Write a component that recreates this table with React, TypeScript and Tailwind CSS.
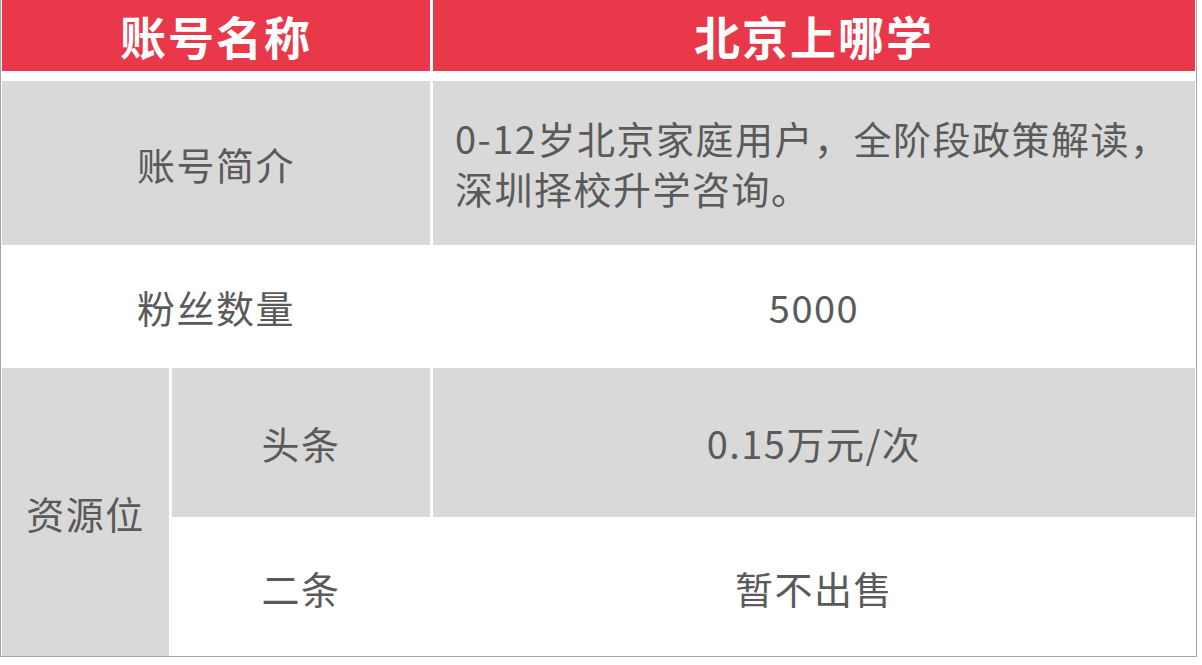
const FONT = '"Noto Sans CJK SC", "Noto Sans", sans-serif'

function Cell({ children, gray, className = '' }: { children: React.ReactNode; gray?: boolean; className?: string }) {
  return (
    <div className={`flex items-center justify-center ${gray ? 'bg-[#d9d9d9]' : 'bg-white'} ${className}`}>
      {children}
    </div>
  )
}

export default function App() {
  return (
    <div className="min-h-screen bg-white" style={{ fontFamily: FONT }}>
      <div className="w-[1197px] border-x border-b border-[#a6a6a6] px-px">
        <div className="grid grid-cols-[428px_1fr] gap-x-[3px] mb-[10px] h-[71px] text-[46px] font-bold tracking-[2px] text-white">
          <div className="flex items-center justify-center bg-[#e83849]">账号名称</div>
          <div className="flex items-center justify-center bg-[#e83849]">北京上哪学</div>
        </div>

        <div className="grid grid-cols-[167px_258px_1fr] grid-rows-[164px_119px_149px_137px] gap-x-[3px] gap-y-[2px] text-[38px] tracking-[1.5px] text-[#5a5a5a]">
          <Cell gray className="col-span-2">账号简介</Cell>
          <div className="flex items-center bg-[#d9d9d9] pl-[22px] pr-2 leading-[50px]">
            <p>
              0-12岁北京家庭用户，全阶段政策解读，
              <br />
              深圳择校升学咨询。
            </p>
          </div>

          <Cell className="col-span-2">粉丝数量</Cell>
          <Cell>5000</Cell>

          <Cell gray className="row-span-2">资源位</Cell>
          <Cell gray>头条</Cell>
          <Cell gray>0.15万元/次</Cell>

          <Cell>二条</Cell>
          <Cell>暂不出售</Cell>
        </div>
      </div>
    </div>
  )
}
